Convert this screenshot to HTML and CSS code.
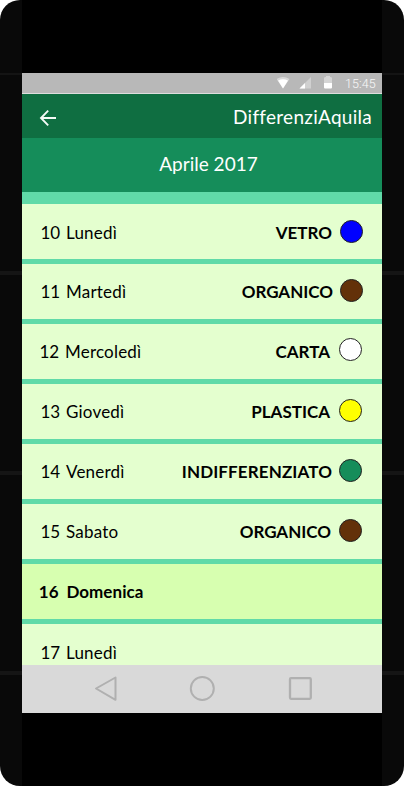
FILE: index.html
```html
<!DOCTYPE html>
<html lang="it">
<head>
<meta charset="utf-8">
<title>DifferenziAquila</title>
<link rel="stylesheet" href="styles.css">
</head>
<body>
<div class="phone">
  <div class="screen">
    <div class="status">
      <svg class="indicators" width="64" height="20" viewBox="0 0 64 20">
        <path d="M-.5 6Q6 2 12.500 6L6 15.500Z" fill="#d8d8d8"/>
        <path d="M1 7.500Q6 5 11 7.500L6 15.500Z" fill="#fff"/>
        <path d="M34 4V15.500H22.500Z" fill="#d0d0d0"/>
        <path d="M28 10V15.500H22.500Z" fill="#fff"/>
        <path d="M47 15V5Q47 4 49 4V3H53V4Q55 4 55 5V10H47Z" fill="#d5d5d5"/>
        <path d="M47 10H55V14.500Q55 15.500 54 15.500H48Q47 15.500 47 14.500Z" fill="#fff"/>
      </svg>
      <span class="clock">15:45</span>
    </div>
    <header class="appbar">
      <svg width="18" height="18" viewBox="0 0 18 18" fill="none" stroke="#f4faf6" stroke-width="1.900"><path d="M17 9H2M9.200 1.700L2 9L9.200 16.300"/></svg>
      <span class="brand">DifferenziAquila</span>
    </header>
    <h1 class="month">Aprile 2017</h1>
    <main class="days">
      <div class="day"><span class="num">10</span><span class="name">Lunedì</span><span class="waste">VETRO</span><i class="dot blue"></i></div>
      <div class="day"><span class="num">11</span><span class="name">Martedì</span><span class="waste">ORGANICO</span><i class="dot brown"></i></div>
      <div class="day"><span class="num">12</span><span class="name">Mercoledì</span><span class="waste">CARTA</span><i class="dot white"></i></div>
      <div class="day"><span class="num">13</span><span class="name">Giovedì</span><span class="waste">PLASTICA</span><i class="dot yellow"></i></div>
      <div class="day"><span class="num">14</span><span class="name">Venerdì</span><span class="waste">INDIFFERENZIATO</span><i class="dot green"></i></div>
      <div class="day"><span class="num">15</span><span class="name">Sabato</span><span class="waste">ORGANICO</span><i class="dot brown"></i></div>
      <div class="day sunday"><span class="num">16</span><span class="name">Domenica</span></div>
      <div class="day"><span class="num">17</span><span class="name">Lunedì</span></div>
    </main>
    <nav class="navbar">
      <svg width="360" height="48" viewBox="0 0 360 48" fill="none" stroke="#b0b0b0" stroke-width="2" stroke-linejoin="round">
        <path d="M93.500 12.500V34.800L74 23.500Z"/>
        <circle cx="180.300" cy="23.500" r="11.500"/>
        <rect x="268" y="13.200" width="20.800" height="20.600" rx="1" stroke-width="2.300"/>
      </svg>
    </nav>
  </div>
</div>
</body>
</html>
```
FILE: styles.css
```css
body {
  margin: 0;
  background: #fff;
  font-family: Lato, "Liberation Sans", sans-serif;
  overflow: hidden;
}
.phone {
  box-sizing: border-box;
  width: 404px;
  height: 786px;
  padding: 0 22px;
  border-radius: 20px;
  overflow: hidden;
  background:
    linear-gradient(#141414, #141414) 0 73px / 100% 2px no-repeat,
    linear-gradient(#151515, #151515) 0 271px / 100% 4px no-repeat,
    linear-gradient(#151515, #151515) 0 471px / 100% 4px no-repeat,
    linear-gradient(#151515, #151515) 0 671px / 100% 4px no-repeat,
    #090909;
}
.screen {
  box-sizing: border-box;
  display: flex;
  flex-direction: column;
  height: 786px;
  padding: 73px 0;
  background: #000;
}
.status {
  box-sizing: border-box;
  flex: none;
  display: flex;
  justify-content: flex-end;
  height: 21px;
  padding-right: 5px;
  background: #b8b8b8;
  border-bottom: 1px solid #dedede;
}
.indicators {
  margin-right: 4px;
}
.clock {
  width: 32px;
  color: #f8f8f8;
  font: 300 12.5px/21px Roboto, sans-serif;
  letter-spacing: 0.1px;
  white-space: nowrap;
}
.appbar {
  flex: none;
  display: flex;
  align-items: center;
  justify-content: space-between;
  height: 44px;
  padding: 0 10px 0 17px;
  background: #0f6e41;
  color: #fff;
}
.appbar svg {
  margin-top: 4px;
}
.brand {
  padding-top: 2px;
  font-size: 19px;
  line-height: 44px;
  letter-spacing: 0.28px;
}
.month {
  flex: none;
  height: 54px;
  margin: 0;
  padding-left: 13px;
  background: #158d5a;
  color: #fff;
  font-size: 19px;
  font-weight: 400;
  line-height: 52px;
  text-align: center;
}
.days {
  flex: 1;
  min-height: 0;
  overflow: hidden;
  padding-top: 12px;
  display: flex;
  flex-direction: column;
  gap: 5px;
  background: #60daa8;
}
.day {
  box-sizing: border-box;
  flex: none;
  display: grid;
  grid-template-columns: 26px 1fr auto 23px;
  height: 55px;
  padding: 0 20px 0 18px;
  background: #e4ffcf;
  color: #000;
  font-size: 17px;
  line-height: 56px;
}
.day:first-child {
  line-height: 58px;
}
.day:nth-child(-n+2) {
  padding-right: 19px;
}
.day:nth-child(3) {
  padding-left: 17px;
}
.name {
  letter-spacing: 0.2px;
}
.num {
  padding-left: 0.4px;
}
.waste {
  margin-right: 9px;
  font-weight: 700;
}
.day:nth-child(2) .waste,
.day:nth-child(5) .waste {
  margin-right: 7px;
}
.day:nth-child(5) .waste {
  letter-spacing: 0.12px;
}
.day:nth-child(6) .waste,
.day:nth-child(1) .waste {
  margin-right: 8px;
}
.dot {
  box-sizing: border-box;
  width: 23px;
  height: 23px;
  margin-top: 15px;
  border: 1px solid #222;
  border-radius: 50%;
}
.day:first-child .dot {
  margin-top: 16px;
}
.day:nth-child(3) .dot {
  margin-top: 14px;
}
.blue { background: #00f; }
.brown { background: #633109; }
.white { background: #fff; }
.yellow { background: #ff0; }
.green { background: #158d5a; }
.sunday {
  grid-template-columns: 28px 1fr;
  padding-left: 16.4px;
  background: #d7ffb0;
  font-weight: 700;
}
.sunday .name {
  letter-spacing: 0.05px;
}
.day:last-child {
  line-height: 58px;
}
.navbar {
  flex: none;
  height: 48px;
  background: #d9d9d9;
}
.navbar svg {
  display: block;
}
```
